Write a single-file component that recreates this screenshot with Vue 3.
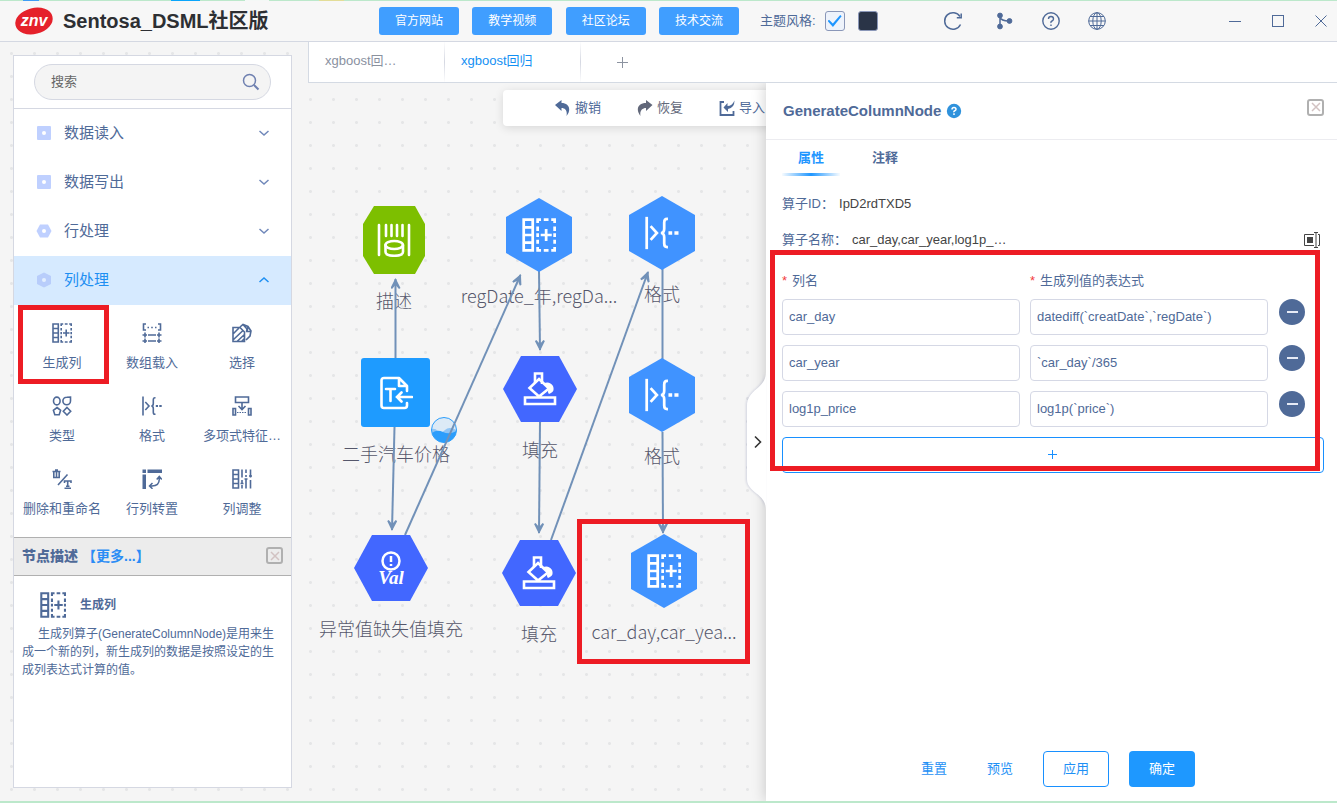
<script setup>
import { ref } from 'vue'

const links = ['官方网站', '教学视频', '社区论坛', '技术交流']
const lightTheme = ref(true)
const darkTheme = ref(false)
const keyword = ref('')

const groups = [
  { name: '数据读入', shape: 'g-square', open: false },
  { name: '数据写出', shape: 'g-square', open: false },
  { name: '行处理', shape: 'g-flat', open: false },
  { name: '列处理', shape: 'g-pointy', open: true },
]

const operators = [
  { name: '生成列', icon: 'i-gen', marked: true },
  { name: '数组载入', icon: 'i-array' },
  { name: '选择', icon: 'i-select' },
  { name: '类型', icon: 'i-type' },
  { name: '格式', icon: 'i-format' },
  { name: '多项式特征…', icon: 'i-poly' },
  { name: '删除和重命名', icon: 'i-rename' },
  { name: '行列转置', icon: 'i-transpose' },
  { name: '列调整', icon: 'i-adjust' },
]

const shapes = {
  octagon: '17,3 58,3 68,21 68,53 58,71 17,71 6,53 6,21',
  pointy: '37,0 70,19 70,55 37,74 4,55 4,19',
  flat: '0,37 18,4 56,4 74,37 56,70 18,70',
}

const nodes = [
  { id: 1, label: '描述', x: 86, y: 157, shape: 'octagon', fill: '#7dbf00', icon: 'i-describe' },
  { id: 2, label: 'regDate_年,regDa...', x: 231, y: 152, shape: 'pointy', fill: '#4093ff', icon: 'i-gen' },
  { id: 3, label: '格式', x: 354, y: 150, shape: 'pointy', fill: '#4093ff', icon: 'i-format' },
  { id: 4, label: '二手汽车价格', x: 88, y: 310, shape: 'square', fill: '#1e9bff', icon: 'i-file' },
  { id: 5, label: '填充', x: 232, y: 306, shape: 'flat', fill: '#4267ff', icon: 'i-fill' },
  { id: 6, label: '格式', x: 354, y: 312, shape: 'pointy', fill: '#4093ff', icon: 'i-format' },
  { id: 7, label: '异常值缺失值填充', x: 83, y: 485, shape: 'flat', fill: '#4267ff', icon: 'i-val' },
  { id: 8, label: '填充', x: 231, y: 490, shape: 'flat', fill: '#4267ff', icon: 'i-fill' },
  { id: 9, label: 'car_day,car_yea...', x: 356, y: 488, shape: 'pointy', fill: '#4093ff', icon: 'i-gen' },
]

const edges = [
  { d: 'M87.5 275V196', arrow: true },
  { d: 'M86.5 344L84 447', arrow: true },
  { d: 'M97 452L212.500 192', arrow: true },
  { d: 'M231 188L232 267', arrow: true },
  { d: 'M232 339L231 450', arrow: true },
  { d: 'M243 457L340 189', arrow: true },
  { d: 'M354.5 276V186', arrow: false },
  { d: 'M354.5 349L355 450', arrow: true },
]

const rows = ref([
  { column: 'car_day', expr: 'datediff(`creatDate`,`regDate`)' },
  { column: 'car_year', expr: '`car_day`/365' },
  { column: 'log1p_price', expr: 'log1p(`price`)' },
])
const addRow = () => rows.value.push({ column: '', expr: '' })
const removeRow = (i) => rows.value.splice(i, 1)
</script>

<template>
  <div class="page">
    <svg class="sprite" width="0" height="0" aria-hidden="true">
      <symbol id="g-square" viewBox="0 0 16 16">
        <rect x="1" y="1" width="14" height="14" rx="1" fill="#bfd0ff" /><circle cx="8" cy="8" r="2" fill="#fff" />
      </symbol>
      <symbol id="g-flat" viewBox="0 0 16 16">
        <path d="M0.500 8L4 1.500H12L15.500 8L12 14.500H4Z" fill="#bfd0ff" /><circle cx="8" cy="8" r="2" fill="#fff" />
      </symbol>
      <symbol id="g-pointy" viewBox="0 0 16 16">
        <path d="M8 0.500L15 4V12L8 15.500L1 12V4Z" fill="#b8cdfb" /><circle cx="8" cy="8" r="2" fill="#e3effe" />
      </symbol>
      <symbol id="i-gen" viewBox="0 0 20 20">
        <g fill="none" stroke="currentColor" stroke-width="1.600">
          <path d="M1 1H6.300V19H1ZM1 5.500H6.300M1 10H6.300M1 14.500H6.300" />
          <path d="M9.200 3V1H11.200M12.800 1H15.600M17.200 1H19.200V3M19.200 5V7.600M19.200 9V11.200M19.200 12.800V15.200M19.200 17V19H17.200M15.600 19H12.800M11.200 19H9.200V17M9.200 15.200V12.800M9.200 11.200V9M9.200 7.600V5" />
          <path d="M14.200 6.500V13.500M11 10H17.500" />
        </g>
      </symbol>
      <symbol id="i-array" viewBox="0 0 20 20">
        <g fill="none" stroke="currentColor" stroke-width="1.600">
          <path d="M4 1H1.500V7H4M16 1H18.500V7H16M5.500 4.500H7M9.200 4.500H10.800M13 4.500H14.500" />
          <path d="M0.500 12H5M6 12H14M15 12H19.500M3 9.500V14.500M17 9.500V14.500M0.500 18H5M6 18H14M15 18H19.500M3 15.500V20M17 15.500V20" />
        </g>
      </symbol>
      <symbol id="i-select" viewBox="0 0 20 20">
        <g fill="none" stroke="currentColor" stroke-width="1.600">
          <path d="M1 4.500H8L12.500 9V18.500H1ZM1 11L7 5M1 17L11 7.500M5 18.500L12.500 11.500M9.500 18.500L12.500 15.500" />
          <path d="M8 4L11 1.500L16 3.500L19 8L18 13L14 17M11 1.500L15 6L14.500 9M16 3.500L15 8.500H18.500" />
        </g>
      </symbol>
      <symbol id="i-type" viewBox="0 0 20 20">
        <g fill="none" stroke="currentColor" stroke-width="1.600">
          <ellipse cx="4.800" cy="5" rx="3.300" ry="3.900" />
          <path d="M18.500 1V5A3.800 3.800 0 1 1 14.700 1.200Z" />
          <path d="M5 11.500L8.600 14.300L7.200 18.700H2.800L1.400 14.300Z" />
          <path d="M15 11.500L18.700 15.300L15 19L11.300 15.300Z" />
        </g>
      </symbol>
      <symbol id="i-format" viewBox="0 0 20 20">
        <g fill="none" stroke="currentColor" stroke-width="1.600">
          <path d="M1 0.500V19.500" /><path d="M3.300 6L7 10L3.300 14" />
          <path d="M13.500 1.700H13Q11.300 1.700 11.300 3.800V7.500Q11.300 10 9.300 10Q11.300 10 11.300 12.500V16.200Q11.300 18.300 13 18.300H13.500" />
        </g>
        <path d="M13.800 9H16V11H13.800ZM17.300 9H19.700V11H17.300Z" fill="currentColor" />
      </symbol>
      <symbol id="i-poly" viewBox="0 0 20 20">
        <g fill="none" stroke="currentColor" stroke-width="1.600">
          <path d="M3.500 1H16.500V6.500H3.500ZM1 12.500H3.500V19H1ZM16.500 12.500H19V19H16.500ZM10 7V13M6.500 10L10 13.500L13.500 10" />
          <path d="M5 16.500H15" stroke-dasharray="1.500 1" stroke-width="1" />
        </g>
      </symbol>
      <symbol id="i-rename" viewBox="0 0 20 20">
        <g fill="none" stroke="currentColor" stroke-width="1.600">
          <path d="M0.500 2.500H8.500M3 1H6M1.800 3V8.500H7.200V3M4.500 3V8.500M6 16L15.500 5.500" />
          <path d="M12.500 14V12H19V14M15.700 12V17M14 17.300H17.500M12.500 19.300H19" />
        </g>
      </symbol>
      <symbol id="i-transpose" viewBox="0 0 20 20">
        <path d="M0.500 0.500H4V4H0.500ZM5.500 0.500H20V4H5.500ZM0.500 5.500H4V20H0.500Z" fill="currentColor" />
        <path d="M17.300 8.500V10Q17.300 17 10 17H8.500M14.700 10.500L17.300 7.500L19.800 10.500M10.500 14L7.500 17L10.500 19.800" fill="none" stroke="currentColor" stroke-width="1.500" />
      </symbol>
      <symbol id="i-adjust" viewBox="0 0 20 20">
        <g fill="none" stroke="currentColor" stroke-width="1.600">
          <path d="M1 1H6.500V19H1ZM1 5.500H6.500M1 10H6.500M1 14.500H6.500" />
          <path d="M10 0.500V8.500M10 11V14M10 16V19.500M14 0.500V4M14 6V8M14 10.500V19.500M18.500 0.500V8.500M18.500 11V19.500M12.500 10H15.500M8.500 14.500H11.500M17 7H20" />
        </g>
      </symbol>
      <symbol id="i-describe" viewBox="0 0 34 34">
        <g fill="none" stroke="currentColor" stroke-width="2.600" stroke-linecap="round">
          <path d="M2 2V32M9 2V13M14.500 2V13M20 2V13M25.500 2V13M32 2V32" />
          <ellipse cx="17.200" cy="22" rx="8.700" ry="4" />
          <path d="M8.500 22V29C8.500 34 26 34 26 29V22" />
        </g>
      </symbol>
      <symbol id="i-file" viewBox="0 0 34 34">
        <g fill="none" stroke="currentColor" stroke-width="2.600" stroke-linejoin="round" stroke-linecap="round">
          <path d="M28 15V10L20 2H5Q2.500 2 2.500 4.500V29.500Q2.500 32 5 32H25.500Q28 32 28 29.500V27M20 2V10H28" />
          <path d="M7 13H16M11.500 13V25M33 21H18M22.500 16.500L18 21L22.500 25.500" stroke-linejoin="miter" />
        </g>
      </symbol>
      <symbol id="i-fill" viewBox="0 0 34 34">
        <g fill="none" stroke="currentColor" stroke-width="2.600">
          <path d="M2 25.500H32V32H2ZM16 7L26 16.500L16 24.500L6.500 16Z" />
          <path d="M12 11V1.500H19V12" />
        </g>
        <path d="M21 11Q27 9 30 14Q32 19 28 21L26 22Q24 20 26 16Z" fill="currentColor" />
      </symbol>
      <symbol id="i-val" viewBox="0 0 34 34">
        <circle cx="17" cy="10" r="8.500" fill="none" stroke="currentColor" stroke-width="2.500" />
        <path d="M17 5V11M17 13V15" stroke="currentColor" stroke-width="2.500" />
        <text x="17" y="33" class="val-text">Val</text>
      </symbol>
      <symbol id="i-chevron" viewBox="0 0 12 12">
        <path d="M1.500 4L6 8L10.500 4" fill="none" stroke="currentColor" stroke-width="1.500" />
      </symbol>
      <symbol id="i-cross" viewBox="0 0 12 12">
        <path d="M2 2L10 10M10 2L2 10" fill="none" stroke="currentColor" stroke-width="1.500" />
      </symbol>
      <marker id="arrow" viewBox="0 0 12 10" refX="11" refY="5" markerWidth="12" markerHeight="10" markerUnits="userSpaceOnUse" orient="auto">
        <path d="M12 5L2 0L1 1.500L5 5L1 8.500L2 10Z" fill="#7191b8" />
      </marker>
    </svg>

    <div class="strip-top"></div>
    <header class="topbar">
      <div class="brand">
        <svg class="logo" width="40" height="30" viewBox="0 0 40 30" role="img" aria-label="znv">
          <ellipse cx="20" cy="15" rx="19" ry="13" transform="rotate(-14 20 15)" fill="#e5212b" />
          <text x="20" y="20" class="logo-text">znv</text>
        </svg>
        <h1>Sentosa_DSML社区版</h1>
      </div>
      <nav class="links">
        <button v-for="l in links" :key="l" type="button">{{ l }}</button>
      </nav>
      <div class="theme">
        <span>主题风格:</span>
        <input v-model="lightTheme" type="checkbox" class="check" aria-label="浅色" />
        <input v-model="darkTheme" type="checkbox" class="check dark" aria-label="深色" />
      </div>
      <div class="tools">
        <button type="button" class="refresh" aria-label="刷新">
          <svg width="20" height="20" viewBox="0 0 20 20" fill="none" stroke="currentColor" stroke-width="1.500">
            <path d="M17.500 13.500A8.300 8.300 0 1 1 17 5.500" /><path d="M18.200 2.500V6.800H13.800" />
          </svg>
        </button>
        <button type="button" aria-label="流程">
          <svg width="20" height="20" viewBox="0 0 20 20" fill="currentColor" stroke="currentColor">
            <circle cx="5" cy="4.500" r="2.400" /><circle cx="5" cy="15.500" r="2.400" /><circle cx="14.500" cy="10" r="2.400" />
            <path d="M5 4.500V15.500M5 6Q6 10 14 10" fill="none" stroke-width="1.500" />
          </svg>
        </button>
        <button type="button" aria-label="帮助">
          <svg width="20" height="20" viewBox="0 0 20 20" fill="none" stroke="currentColor" stroke-width="1.400">
            <circle cx="10" cy="10" r="8.200" /><path d="M7.500 8Q7.500 5.500 10 5.500T12.500 8Q12.500 9.300 11 10T10 12M10 13.500V15" />
          </svg>
        </button>
        <button type="button" aria-label="语言">
          <svg width="20" height="20" viewBox="0 0 20 20" fill="none" stroke="currentColor">
            <circle cx="10" cy="10" r="8.300" /><ellipse cx="10" cy="10" rx="4.200" ry="8.300" />
            <path d="M10 1.700V18.300M1.700 10H18.300M3 5.500H17M3 14.500H17" />
          </svg>
        </button>
      </div>
      <div class="window">
        <button type="button" aria-label="最小化"><svg width="14" height="14" viewBox="0 0 14 14"><path d="M1 7.500H13" stroke="currentColor" /></svg></button>
        <button type="button" aria-label="最大化"><svg width="14" height="14" viewBox="0 0 14 14"><rect x="1.500" y="1.500" width="11" height="11" fill="none" stroke="currentColor" /></svg></button>
        <button type="button" aria-label="关闭"><svg width="14" height="14" viewBox="0 0 14 14"><path d="M1.500 1.500L12.500 12.500M12.500 1.500L1.500 12.500" stroke="currentColor" /></svg></button>
      </div>
    </header>

    <div class="workspace">
      <aside class="sidebar">
        <div class="search-wrap">
          <div class="search">
            <input v-model="keyword" type="text" placeholder="搜索" aria-label="搜索" />
            <svg width="18" height="18" viewBox="0 0 18 18" fill="none" stroke="#6f80b0"><circle cx="7.500" cy="7.500" r="6" stroke-width="1.500" /><path d="M12 12L16.500 16.500" stroke-width="2" /></svg>
          </div>
        </div>
        <button v-for="g in groups" :key="g.name" type="button" class="group" :class="{ open: g.open }">
          <svg width="16" height="16"><use :href="'#' + g.shape" /></svg>
          <span>{{ g.name }}</span>
          <svg class="chev" width="12" height="12"><use href="#i-chevron" /></svg>
        </button>
        <div class="operators">
          <button v-for="o in operators" :key="o.name" type="button" class="operator" :class="{ marked: o.marked }">
            <svg width="20" height="20"><use :href="'#' + o.icon" /></svg>
            <span>{{ o.name }}</span>
          </button>
        </div>
        <div class="desc-head">
          <b>节点描述</b><a href="#more">【更多...】</a>
          <button type="button" class="close-box" aria-label="关闭"><svg width="12" height="12"><use href="#i-cross" /></svg></button>
        </div>
        <div class="desc">
          <div class="desc-title"><svg width="26" height="26"><use href="#i-gen" /></svg><b>生成列</b></div>
          <p>生成列算子(GenerateColumnNode)是用来生成一个新的列，新生成列的数据是按照设定的生成列表达式计算的值。</p>
        </div>
      </aside>

      <main class="stage">
        <div class="tabs">
          <button type="button" class="tab">xgboost回…</button>
          <button type="button" class="tab active">xgboost回归</button>
          <button type="button" class="add-tab" aria-label="新建"><svg width="12" height="12" viewBox="0 0 12 12"><path d="M6.500 1V12M1 6.500H12" stroke="#8c93a0" /></svg></button>
        </div>

        <div class="canvas">
          <div class="toolbar">
            <button type="button">
              <svg width="16" height="18" viewBox="0 0 16 18"><path d="M0 6L6.500 1V4C13.500 4 17 10 11.500 17C12.500 12 10.500 9 6.500 9V12Z" fill="currentColor" /></svg>撤销
            </button>
            <button type="button" class="muted">
              <svg width="16" height="18" viewBox="0 0 16 18"><path d="M15.500 6L9 1V4C1.500 4-2 10 3.500 17C2.500 12 5 9 9 9V12Z" fill="currentColor" /></svg>恢复
            </button>
            <button type="button">
              <svg width="16" height="18" viewBox="0 0 16 18"><path d="M5 3H1.500V16H14.500V12" fill="none" stroke="currentColor" stroke-width="1.800" /><path d="M15.500 1.500Q15.500 9 9 10V13L4.500 8.500L8.500 4V7Q13 7 15.500 1.500Z" fill="currentColor" /></svg>导入
            </button>
          </div>

          <svg class="edges" width="100%" height="100%">
            <path v-for="e in edges" :key="e.d" :d="e.d" :marker-end="e.arrow ? 'url(#arrow)' : null" />
          </svg>

          <div v-for="n in nodes" :key="n.id" class="node" :style="{ left: n.x + 'px', top: n.y + 'px' }">
            <div class="figure">
              <svg width="74" height="74" viewBox="0 0 74 74">
                <rect v-if="n.shape === 'square'" x="2" y="2" width="69" height="69" rx="3" :fill="n.fill" />
                <polygon v-else :points="shapes[n.shape]" :fill="n.fill" />
                <use :href="'#' + n.icon" x="20" y="20" width="34" height="34" />
              </svg>
            </div>
            <span class="label">{{ n.label }}</span>
          </div>

          <svg class="ball" width="28" height="28" viewBox="0 0 28 28" aria-hidden="true">
            <circle cx="14" cy="14" r="12.500" fill="#dceaf6" />
            <path d="M1.500 13Q5 12 8 15T15 14T26.500 14A12.500 12.500 0 0 1 1.500 14Z" fill="#8ec4f5" />
            <path d="M2 17Q7 13 13 16T26.500 15A12.500 12.500 0 0 1 2 17Z" fill="#2b9dfb" />
            <circle cx="14" cy="14" r="12.500" fill="none" stroke="#2b9dfb" />
          </svg>
          <div class="node-mark"></div>

          <section class="drawer">
            <button type="button" class="handle" aria-label="收起">
              <svg width="20" height="138" viewBox="0 0 20 138">
                <path d="M20 0C20 17 1 17 1 34V107C1 121 20 121 20 138Z" fill="#fff" />
                <path d="M9 64.500L14.500 70L9 75.500" fill="none" stroke="#333" stroke-width="1.600" />
              </svg>
            </button>
            <div class="drawer-head">
              <h2>GenerateColumnNode</h2>
              <svg width="16" height="16" viewBox="0 0 16 16" role="img" aria-label="帮助">
                <circle cx="8" cy="8" r="7.200" fill="#2f92dc" />
                <path d="M6 6.500Q6 4.500 8 4.500T10 6.300Q10 7.300 8.800 7.800T8 9.200M8 10.300V12" fill="none" stroke="#fff" stroke-width="1.500" />
              </svg>
              <button type="button" class="close-box" aria-label="关闭"><svg width="12" height="12"><use href="#i-cross" /></svg></button>
            </div>
            <div class="drawer-body">
              <div class="subtabs">
                <button type="button" class="active">属性</button>
                <button type="button">注释</button>
              </div>
              <div class="info"><span>算子ID：</span><em>IpD2rdTXD5</em></div>
              <div class="info name">
                <span>算子名称：</span><em>car_day,car_year,log1p_…</em>
                <button type="button" aria-label="重命名">
                  <svg width="16" height="16" viewBox="0 0 16 16" fill="none" stroke="#444">
                    <path d="M10 2.500H0.500V13.500H10M14 2.500H15.500V13.500H14" /><rect x="3.500" y="5.500" width="5" height="5" fill="#444" /><path d="M10 0.500H14M12 0.500V15.500M10 15.500H14" />
                  </svg>
                </button>
              </div>
              <form class="fields" @submit.prevent>
                <div class="row heads">
                  <span id="col-head"><i>*</i>列名</span><span id="expr-head"><i>*</i>生成列值的表达式</span>
                </div>
                <div v-for="(r, i) in rows" :key="i" class="row">
                  <input v-model="r.column" type="text" aria-labelledby="col-head" />
                  <input v-model="r.expr" type="text" aria-labelledby="expr-head" />
                  <button type="button" class="minus" aria-label="删除" @click="removeRow(i)"></button>
                </div>
                <button type="button" class="add" aria-label="添加" @click="addRow">
                  <svg width="10" height="10" viewBox="0 0 10 10"><path d="M4.500 0V9M0 4.500H9" stroke="#1890ff" /></svg>
                </button>
                <div class="form-mark"></div>
              </form>
              <div class="actions">
                <button type="button">重置</button>
                <button type="button">预览</button>
                <button type="button" class="outline">应用</button>
                <button type="button" class="solid">确定</button>
              </div>
            </div>
          </section>
        </div>
      </main>
    </div>
    <div class="strip-bottom"></div>
  </div>
</template>

<style>
body {
  margin: 0;
}
</style>

<style scoped>
* {
  box-sizing: border-box;
}
.page {
  min-height: 100vh;
  display: flex;
  flex-direction: column;
  background: #f5f5f5;
  color: #4f6a98;
  font: 13px/18px "Liberation Sans", "Noto Sans CJK SC", sans-serif;
}
button,
input {
  font: inherit;
  color: inherit;
}
button {
  background: none;
  border: 0;
  padding: 0;
  cursor: pointer;
}
svg {
  display: block;
  flex: none;
}
.sprite {
  position: absolute;
}
.strip-top {
  height: 1px;
  background: linear-gradient(90deg, #bce8cb 23px, #3f9df5 23px, #3f9df5 39px, #bce8cb 39px, #bce8cb 171px, #0aa5fb 171px, #0aa5fb 200px, #bce8cb 200px, #bce8cb 245px, #f4f8f6 245px, #f4f8f6 269px, #bce8cb 269px, #bce8cb 319px, #e3dd98 319px, #e3dd98 344px, #bce8cb 344px);
}
.strip-bottom {
  height: 2px;
  background: #bce8cb;
}
.topbar {
  height: 41px;
  display: flex;
  align-items: center;
  background: #f7f7f7;
  border-bottom: 1px solid #d4d8e2;
}
.brand {
  width: 379px;
  padding-left: 14px;
  display: flex;
  align-items: center;
  gap: 9px;
}
.logo {
  overflow: visible;
}
.logo-text {
  font: italic bold 16px "Liberation Sans", sans-serif;
  fill: #fff;
  text-anchor: middle;
}
h1 {
  margin: 0;
  font-size: 20px;
  line-height: 28px;
  color: #2d2f33;
}
.links {
  width: 360px;
  display: flex;
  justify-content: space-between;
}
.links button {
  width: 80px;
  height: 28px;
  border-radius: 3px;
  background: #409eff;
  color: #fff;
  font-size: 12px;
}
.theme {
  display: flex;
  align-items: center;
  margin-left: 21px;
}
.theme span {
  margin-right: 9px;
}
.check {
  appearance: none;
  width: 20px;
  height: 20px;
  margin: 0 13px 0 0;
  border: 1px solid #8a97b8;
  border-radius: 3px;
  background: #eef3fb;
  display: grid;
  place-items: center;
}
.check:checked::after {
  content: "";
  width: 14px;
  height: 12px;
  background: #1e96ff;
  clip-path: polygon(0 50%, 10% 40%, 37% 70%, 90% 0, 100% 10%, 38% 100%);
}
.check.dark {
  background: #2a3447;
  margin: 0;
}
.tools {
  display: flex;
  gap: 26px;
  margin-left: 65px;
}
.refresh {
  margin-right: 6px;
}
.window {
  display: flex;
  gap: 29px;
  margin-left: auto;
  padding-right: 9px;
}
.workspace {
  flex: 1;
  display: flex;
  gap: 16px;
  padding-left: 13px;
  background: radial-gradient(circle at 50% 50%, #e5e6e7 1px, transparent 2px) 0 0 / 23px 23px;
}
.sidebar {
  width: 279px;
  flex: none;
  margin: 13px 0;
  display: flex;
  flex-direction: column;
  background: #fff;
  border: 1px solid #d5d8e2;
}
.search-wrap {
  padding: 8px 20px;
  border-bottom: 1px solid #d5d8e2;
}
.search {
  height: 36px;
  display: flex;
  align-items: center;
  padding: 0 10px 0 16px;
  border: 1px solid #d5d8e2;
  border-radius: 18px;
  background: #f4f4f4;
}
.search input {
  flex: 1;
  min-width: 0;
  padding: 0;
  border: 0;
  outline: 0;
  background: none;
}
.search input::placeholder {
  color: #666;
}
.group {
  height: 49px;
  flex: none;
  display: flex;
  align-items: center;
  padding: 0 21px 2px 22px;
  font-size: 15px;
  text-align: left;
}
.group span {
  flex: 1;
  margin-left: 12px;
}
.group.open {
  background: #d6eaff;
  color: #1e8ff2;
}
.chev {
  color: #7088ba;
}
.open .chev {
  color: #1e8ff2;
  transform: rotate(180deg);
}
.operators {
  display: grid;
  grid-template-columns: repeat(3, 1fr);
  grid-auto-rows: 73px;
  padding: 6px 4px 7px 3px;
}
.operator {
  position: relative;
  display: flex;
  flex-direction: column;
  align-items: center;
  justify-content: center;
  gap: 11px;
  white-space: nowrap;
}
.operator.marked::after {
  content: "";
  position: absolute;
  inset: -6px -2px 0 1px;
  border: 5px solid #ed1c24;
}
.desc-head {
  height: 39px;
  flex: none;
  display: flex;
  align-items: center;
  padding: 0 8px 2px;
  border: solid #b0b0b0;
  border-width: 1px 0;
  background: #ececec;
  font-size: 14px;
  font-weight: bold;
}
.desc-head a {
  color: #2b8cf5;
  text-decoration: none;
  margin-left: 4px;
}
.close-box {
  width: 17px;
  height: 17px;
  margin-left: auto;
  display: grid;
  place-items: center;
  border: 2px solid #b0b0b0;
  border-radius: 3px;
  color: #d2c2c2;
}
.desc {
  flex: 1;
  padding: 16px 8px;
  font-size: 12px;
}
.desc-title {
  display: flex;
  align-items: center;
  gap: 14px;
  padding-left: 18px;
}
.desc p {
  margin: 7px 0 0;
  text-indent: 16px;
}
.stage {
  flex: 1;
  min-width: 0;
  display: flex;
  flex-direction: column;
}
.tabs {
  height: 41px;
  display: flex;
  background: #fff;
  border: solid #d4dae3;
  border-width: 0 0 1px 1px;
}
.tab {
  width: 136px;
  padding: 0 0 2px 16px;
  text-align: left;
  color: #8a919f;
  border-right: 1px solid;
  border-image: linear-gradient(#fff, #d5d8e2 50%, #fff) 1;
}
.tab.active {
  color: #1490f3;
}
.add-tab {
  width: 82px;
  display: grid;
  place-items: center;
}
.canvas {
  flex: 1;
  position: relative;
  overflow: hidden;
}
.toolbar {
  height: 36px;
  margin: 7px 0 0 195px;
  padding-left: 52px;
  display: flex;
  gap: 36px;
  background: #fff;
  border-radius: 4px;
  box-shadow: 0 2px 10px rgba(0, 0, 0, 0.12);
}
.toolbar button {
  display: flex;
  align-items: center;
  gap: 4px;
}
.toolbar .muted {
  color: #62687a;
}
.edges {
  position: absolute;
  inset: 0;
  z-index: 1;
  fill: none;
  stroke: #7191b8;
  stroke-width: 2;
  pointer-events: none;
}
.node {
  position: absolute;
  width: 180px;
  margin: -37px 0 0 -90px;
  display: flex;
  flex-direction: column;
  align-items: center;
  gap: 11px;
}
.figure {
  position: relative;
  z-index: 2;
  color: #fff;
}
.val-text {
  font: italic bold 19px "Liberation Serif", serif;
  fill: #fff;
  text-anchor: middle;
}
.label {
  font: 300 18px/24px "Noto Sans CJK SC", sans-serif;
  color: #55576b;
  white-space: nowrap;
}
.ball {
  position: absolute;
  left: 122px;
  top: 333px;
}
.node-mark {
  position: absolute;
  z-index: 3;
  left: 269px;
  top: 436px;
  width: 173px;
  height: 145px;
  border: 5px solid #ed1c24;
}
.drawer {
  position: absolute;
  z-index: 4;
  inset: 0 0 0 458px;
  display: flex;
  flex-direction: column;
  background: #fff;
  box-shadow: 0 0 14px rgba(0, 0, 0, 0.2);
}
.handle {
  position: absolute;
  left: -20px;
  top: 289px;
  filter: drop-shadow(-1px 0 1px rgba(70, 80, 140, 0.2));
}
.drawer-head {
  height: 57px;
  display: flex;
  align-items: center;
  gap: 5px;
  padding: 0 13px 0 17px;
  border-bottom: 1px solid #ececf0;
}
.drawer-head .close-box {
  margin-bottom: 8px;
}
h2 {
  margin: 0;
  font-size: 15px;
  line-height: 20px;
}
.drawer-body {
  flex: 1;
  display: flex;
  flex-direction: column;
  padding: 0 13px 14px 16px;
}
.subtabs {
  display: flex;
  gap: 16px;
  margin-bottom: 10px;
}
.subtabs button {
  width: 58px;
  height: 36px;
  padding-top: 2px;
  font-weight: bold;
  border-bottom: 3px solid transparent;
}
.subtabs .active {
  color: #1e96ff;
  border-image: linear-gradient(90deg, #fff, #1e96ff 50%, #fff) 1;
}
.info {
  height: 36px;
  display: flex;
  align-items: center;
}
.info em {
  font-style: normal;
  color: #444;
  margin-left: 5px;
}
.info button {
  margin: 0 4px 0 auto;
}
.fields {
  position: relative;
  margin-top: 4px;
  display: flex;
  flex-direction: column;
  gap: 10px;
}
.row {
  display: grid;
  grid-template-columns: 1fr 1fr 27px;
  gap: 10px;
  padding-right: 19px;
}
.row.heads {
  height: 27px;
  align-items: center;
  padding-top: 10px;
}
.row i {
  font-style: normal;
  color: #f23c3c;
  margin-right: 5px;
}
.row input {
  min-width: 0;
  height: 36px;
  padding: 0 6px 2px;
  border: 1px solid #d5d8e5;
  border-radius: 4px;
  background: #fff;
}
.minus {
  width: 26px;
  height: 26px;
  justify-self: end;
  border-radius: 50%;
  background: #4f6a98;
  display: grid;
  place-items: center;
}
.minus::after {
  content: "";
  width: 11px;
  height: 2px;
  background: #e6eaf5;
}
.add {
  height: 36px;
  display: grid;
  place-items: center;
  border: 1px solid #1890ff;
  border-radius: 4px;
}
.form-mark {
  position: absolute;
  inset: -12px 4px 2px -12px;
  border: 5px solid #ed1c24;
  pointer-events: none;
}
.actions {
  margin-top: auto;
  display: flex;
  justify-content: center;
  padding-right: 10px;
  color: #1e90f5;
}
.actions button {
  width: 66px;
  height: 36px;
  border-radius: 4px;
}
.actions .outline {
  border: 1px solid #1890ff;
  margin: 0 20px 0 10px;
}
.actions .solid {
  background: #1e98ff;
  color: #fff;
}
</style>
